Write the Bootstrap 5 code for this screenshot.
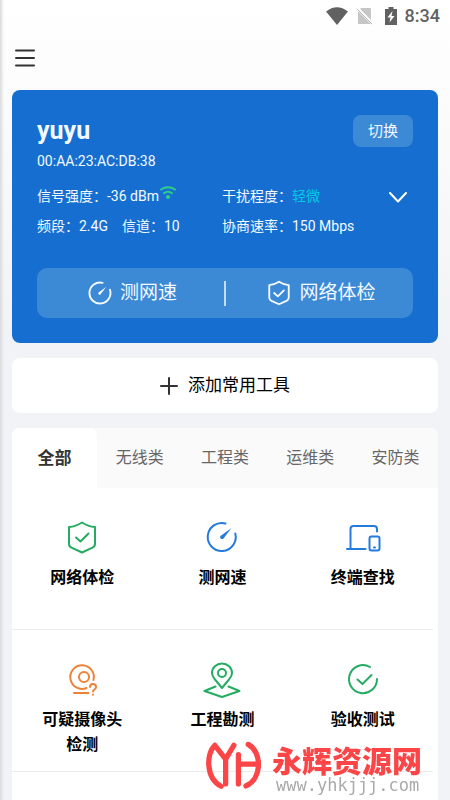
<!DOCTYPE html>
<html lang="zh-CN">
<head>
<meta charset="utf-8">
<meta name="viewport" content="width=device-width, initial-scale=1">
<title>网络工具</title>
<link href="https://cdn.jsdelivr.net/npm/bootstrap@5.3.0/dist/css/bootstrap.min.css" rel="stylesheet">
<style>
  body {
    font-family: Roboto, "Noto Sans CJK SC", sans-serif;
    font-size: 14px;
    line-height: 20px;
    color: #000;
    background: linear-gradient(#fff 0, #fdfdfd 60px, #f2f3f6 340px) #f2f3f6;
    box-shadow: inset 4px 0 3px -2px #d9dadc;
  }
  svg { fill: none; stroke: currentColor; stroke-linecap: round; stroke-linejoin: round; flex: none; }
  .statusbar { height: 32px; padding-right: 10px; color: #616161; font-size: 18px; font-weight: 500; gap: 8px; }
  .statusbar svg { stroke: none; }
  .topbar { height: 58px; padding: 0 13px 7px; }
  .topbar .btn { color: #333; }
  .wrap { padding: 0 12px; gap: 15px; }
  .wifi-card { background: #166fd0; color: #f3faff; border-radius: 8px; padding: 25px; }
  .wifi-name { font-size: 25px; line-height: 32px; }
  .glass, .glass:hover { background: #3c89d6; color: #f3faff; border: 0; }
  .switch-btn { width: 60px; height: 32px; border-radius: 8px; font-size: 15px; }
  .info-grid { row-gap: 10px; margin-top: 15px; }
  .info-left { width: 185px; }
  .info-pair { gap: 14px; }
  .level { color: #05c8e2; }
  .signal { color: #2fcf8a; }
  .fold-btn { color: #fff; margin: 21px 6px 0 0; }
  .quick { height: 50px; border-radius: 10px; margin-top: 32px; }
  .quick .btn { font-size: 19px; color: inherit; gap: 8px; }
  .quick-line { width: 2px; height: 25px; background: #c4dcf4; }
  .add-btn, .add-btn:hover { height: 55px; background: #fff; border: 0; border-radius: 8px; font-size: 17px; color: #000; gap: 10px; }
  .add-btn svg { color: #333; }
  .panel { background: #fff; border-radius: 8px 8px 0 0; }
  .cats { background: #fafafa; border-radius: 8px 8px 0 0; }
  .cats .nav-link { height: 60px; padding: 0; font-size: 16px; color: #666; line-height: 60px; border-radius: 8px 8px 0 0; }
  .cats .nav-link.active { background: #fff; color: #333; font-size: 17px; font-weight: 700; }
  .tools { margin-right: 5px; }
  .tool { height: 142px; padding: 30px 24px 0; font-size: 16px; line-height: 25px; font-weight: 600; color: #000; border-bottom: 1px solid #ebebeb; gap: 9px; }
  .green { color: #25ab62; }
  .blue { color: #247bdd; }
  .orange { color: #ed8239; }
  .brand { right: 28px; bottom: 6px; color: #fb4547; gap: 11px; pointer-events: none; }
  .brand-name { font-size: 30px; line-height: 28px; font-weight: 900; }
  .brand-url { font-family: "DejaVu Sans Mono", monospace; font-size: 17px; line-height: 18px; color: #aaa; }
</style>
</head>
<body class="min-vh-100 d-flex flex-column">
<svg class="d-none">
  <symbol id="gauge" viewBox="0 0 32 32"><path d="M19.500 2.500A14 14 0 1 0 29.200 11.500"/><path d="M24.500 7.500L14 15.200a2 2 0 0 0 2.600 2.800z" fill="currentColor" stroke="none"/></symbol>
  <symbol id="shield" viewBox="0 0 32 34"><path d="M16 2Q10 6 3 6.500V23Q3 26 6 27.500L16 32L26 27.500Q29 26 29 23V6.500Q22 6 16 2Z"/><path d="M9.500 17l5 4.500L22.500 13.500"/></symbol>
</svg>

<div class="statusbar d-flex align-items-center justify-content-end">
  <svg width="22" height="18" viewBox="0 0 22 18"><path fill="currentColor" d="M0 4.500Q11-4 22 4.500L11 18z"/></svg>
  <svg width="17" height="18" viewBox="0 0 17 18"><path fill="#c6c6c6" d="M5 1H14Q15 1 15 2V17H2V5z"/><path d="M0 0L17 17" stroke="#fff" stroke-width="3"/><path d="M1 2L16 17" stroke="#bbb" stroke-width="1"/></svg>
  <svg class="ms-1" width="12" height="18" viewBox="0 0 12 18"><path fill="currentColor" d="M3.500 0h5v2H12V18H0V2h3.500z"/><path fill="#fff" d="M7.500 4L2.500 10.500H5.500L4.500 15.500L9.500 9H6.500z"/></svg>
  <span>8:34</span>
</div>

<header class="topbar d-flex align-items-center">
  <button class="btn border-0 p-0 d-flex" type="button" aria-label="菜单">
    <svg width="24" height="20" viewBox="0 0 24 20" stroke-width="2"><path d="M3 2.500H21M3 10H21M3 17.500H21"/></svg>
  </button>
</header>

<main class="wrap d-flex flex-column flex-grow-1">
  <section class="wifi-card">
    <div class="d-flex justify-content-between align-items-start">
      <div>
        <h1 class="wifi-name fw-bold mb-1">yuyu</h1>
        <div>00:AA:23:AC:DB:38</div>
      </div>
      <button class="btn glass switch-btn p-0" type="button">切换</button>
    </div>
    <div class="d-flex align-items-start">
      <div class="info-grid info-left d-flex flex-column">
        <div class="d-flex">信号强度：-36 dBm
          <svg class="signal" width="18" height="14" viewBox="-1 0 18 14" stroke-width="2"><path d="M1 3.500Q8-1 15 3.500M4 7.200Q8 4.400 12 7.200"/><circle cx="8" cy="11" r="2" fill="currentColor" stroke="none"/></svg>
        </div>
        <div class="d-flex info-pair"><span>频段：2.4G</span><span>信道：10</span></div>
      </div>
      <div class="info-grid d-flex flex-column flex-grow-1">
        <div>干扰程度：<span class="level">轻微</span></div>
        <div>协商速率：150 Mbps</div>
      </div>
      <button class="btn border-0 p-0 d-flex fold-btn" type="button" aria-label="展开">
        <svg width="18" height="11" viewBox="0 0 18 11" stroke-width="2"><path d="M1 1L9 9.500L17 1"/></svg>
      </button>
    </div>
    <div class="quick glass d-flex align-items-center">
      <button class="btn border-0 p-0 ps-1 w-50 d-flex align-items-center justify-content-center" type="button"><svg width="24" height="24" stroke-width="2.500"><use href="#gauge"/></svg>测网速</button>
      <span class="quick-line"></span>
      <button class="btn border-0 p-0 ps-1 w-50 d-flex align-items-center justify-content-center" type="button"><svg width="24" height="26" stroke-width="2.500"><use href="#shield"/></svg>网络体检</button>
    </div>
  </section>

  <button class="btn add-btn p-0 d-flex align-items-center justify-content-center" type="button">
    <svg width="18" height="18" viewBox="0 0 18 18" stroke-width="2"><path d="M9 1V17M1 9H17"/></svg>添加常用工具
  </button>

  <section class="panel flex-grow-1">
    <nav class="cats nav flex-nowrap text-center">
      <a class="nav-link col active" href="#" aria-current="page">全部</a>
      <a class="nav-link col" href="#">无线类</a>
      <a class="nav-link col" href="#">工程类</a>
      <a class="nav-link col" href="#">运维类</a>
      <a class="nav-link col" href="#">安防类</a>
    </nav>
    <div class="tools row row-cols-3 g-0">
      <a class="tool col d-flex flex-column align-items-center text-center text-decoration-none" href="#">
        <svg class="green" width="36" height="38" viewBox="0 0 36 38" stroke-width="2"><path d="M18 4.500Q12 8.500 5 9V26Q5 28.500 7.500 29.600L18 34.500L28.500 29.600Q31 28.500 31 26V9Q24 8.500 18 4.500Z"/><path d="M12 19.500l4.500 4L24.500 15.500"/></svg>
        网络体检</a>
      <a class="tool col d-flex flex-column align-items-center text-center text-decoration-none" href="#">
        <svg class="blue" width="36" height="38" viewBox="0 0 36 38" stroke-width="2"><path d="M21.500 5.500A14 14 0 1 0 31.300 15.500"/><path d="M27.500 10L16.500 18a2 2 0 0 0 2.800 2.800z" fill="currentColor" stroke="none"/></svg>
        测网速</a>
      <a class="tool col d-flex flex-column align-items-center text-center text-decoration-none" href="#">
        <svg class="blue" width="36" height="38" viewBox="0 0 36 38" stroke-width="2"><path d="M5.500 30V11Q5.500 8 8.500 8H29Q32 8 32 11V13.500M2 31H20.500"/><rect x="24.500" y="18.500" width="10" height="14" rx="2"/><path d="M29 29.500h1"/></svg>
        终端查找</a>
      <a class="tool col d-flex flex-column align-items-center text-center text-decoration-none" href="#">
        <svg class="orange" width="36" height="38" viewBox="0 0 36 38" stroke-width="2"><path d="M29.500 20A11.800 11.800 0 1 0 22.500 28M10 33H24.500"/><circle cx="20" cy="17" r="5"/><path d="M26 27Q26 24 29 24Q32 24 32 27Q32 28.500 30.500 29.500Q29 30.500 29 31.500M29 34.500v.2"/></svg>
        可疑摄像头检测</a>
      <a class="tool col d-flex flex-column align-items-center text-center text-decoration-none" href="#">
        <svg class="green" width="38" height="38" viewBox="0 0 38 38" stroke-width="2"><path d="M19 28L12 19.500Q9 16 9 13A10 9.500 0 0 1 29 13Q29 16 26 19.500Z"/><circle cx="19" cy="13" r="4"/><path d="M12.500 26.500L1.500 31L19 37L36.500 31L25.500 26.500"/></svg>
        工程勘测</a>
      <a class="tool col d-flex flex-column align-items-center text-center text-decoration-none" href="#">
        <svg class="green" width="36" height="38" viewBox="0 0 36 38" stroke-width="2"><path d="M25 7A14 14 0 1 0 32 19"/><path d="M12.500 19.500L17.500 24L26.500 15"/></svg>
        验收测试</a>
    </div>
  </section>
</main>

<div class="brand position-fixed d-flex align-items-end">
  <svg class="mb-1" width="55" height="49" viewBox="28 31 168 149" stroke-width="16"><path d="M55 44C28 68 27 145 74 169M55 44L88 86L113 44M88 86V162M127 72V162M127 101H184M157 41C200 65 200 145 150 168"/></svg>
  <div>
    <div class="brand-name">永辉资源网</div>
    <div class="brand-url ps-1">www.yhkjjj.com</div>
  </div>
</div>
<script src="https://cdn.jsdelivr.net/npm/bootstrap@5.3.0/dist/js/bootstrap.bundle.min.js"></script>
</body>
</html>
